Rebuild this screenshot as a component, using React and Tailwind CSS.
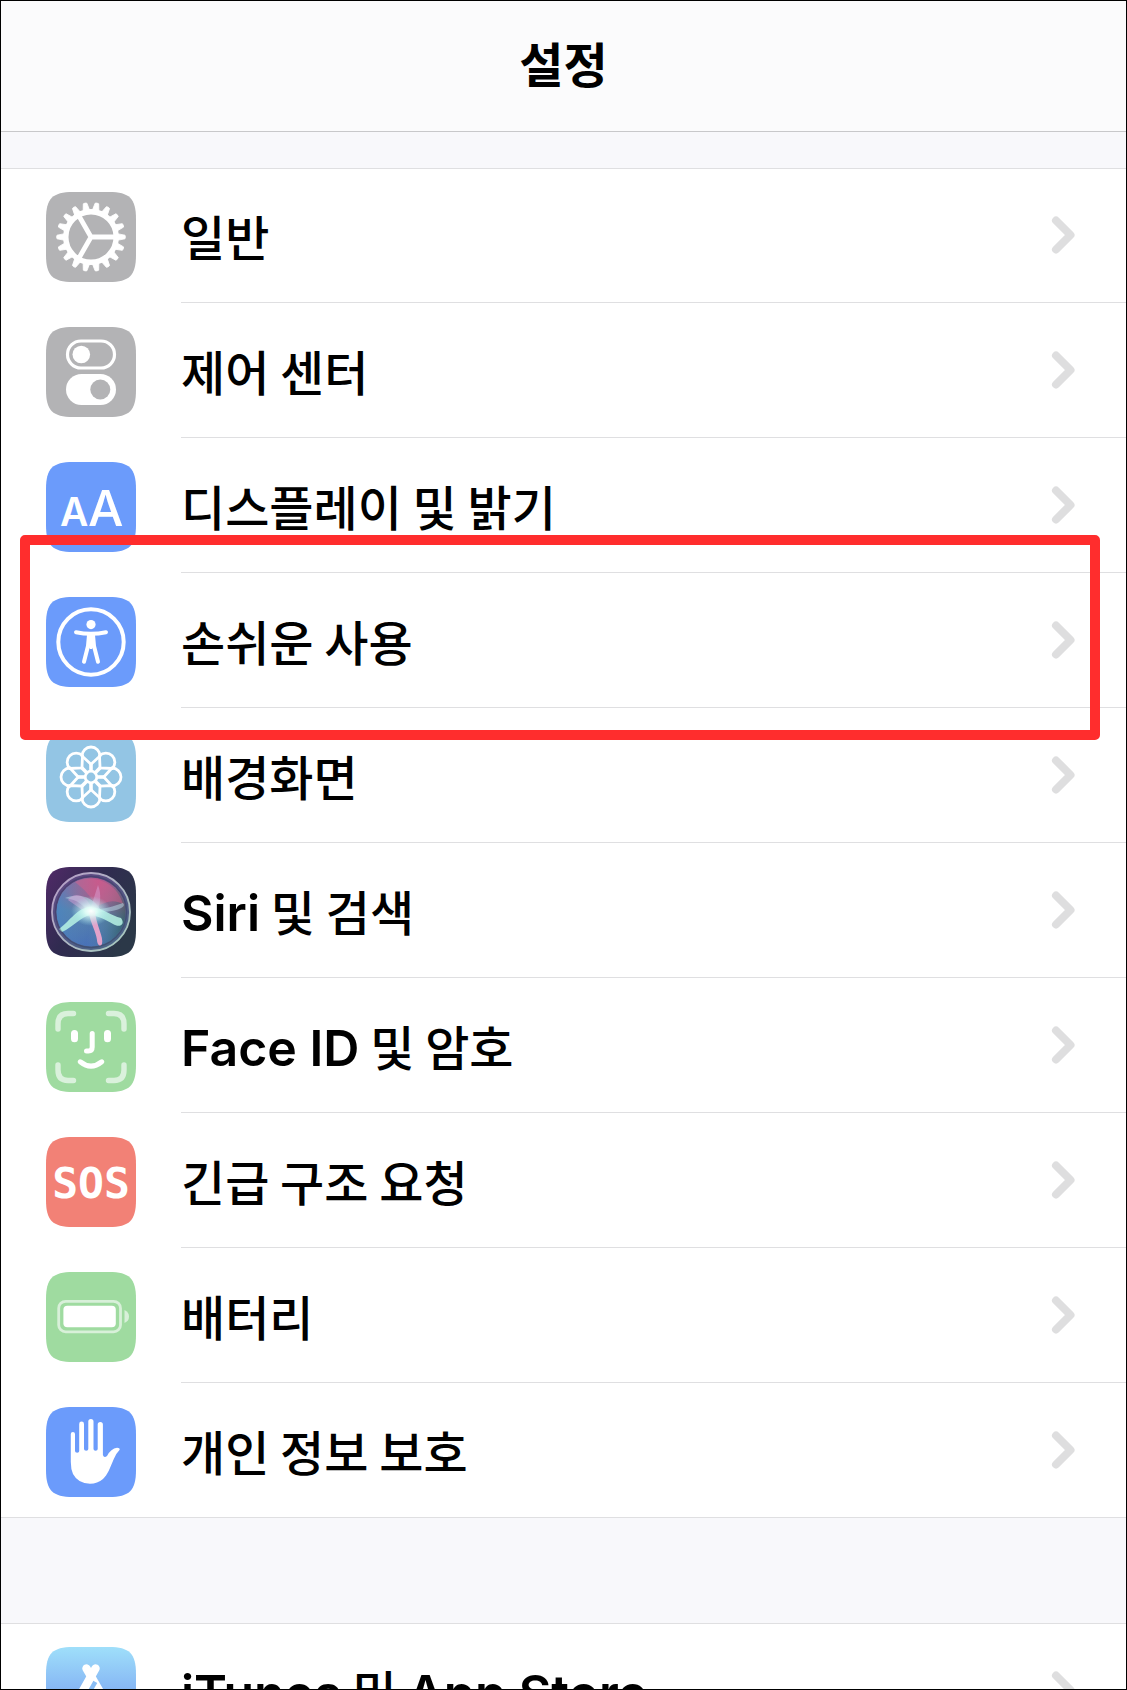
import React from "react";

const TILE = "M27 0H63C83.5 0 90 6.5 90 27V63C90 83.5 83.5 90 63 90H27C6.5 90 0 83.5 0 63V27C0 6.5 6.5 0 27 0Z";
const GEAR_TEETH = Array.from({ length: 18 }, (_, i) => i * 20);
const PETALS = Array.from({ length: 8 }, (_, i) => i * 45);

function Tile({ fill, children }) {
  return (
    <svg viewBox="0 0 90 90" className="mt-6 w-[90px] h-[90px] shrink-0" aria-hidden="true">
      <path d={TILE} fill={fill} />
      {children}
    </svg>
  );
}

function GearIcon() {
  return (
    <Tile fill="#b3b3b5">
      <g transform="translate(45 45)" fill="#fff">
        {GEAR_TEETH.map((deg) => (
          <path key={deg} d="M25 -3.6L34 -1.8Q34.8 0 34 1.8L25 3.6Z" transform={`rotate(${deg})`} stroke="#fff" strokeWidth="0.8" />
        ))}
        <circle r="25.2" fill="none" stroke="#fff" strokeWidth="5.4" />
        <path d="M0 0H24M0 0L-12 -21M0 0L-12 21" stroke="#fff" strokeWidth="4.8" />
      </g>
    </Tile>
  );
}

function ControlIcon() {
  return (
    <Tile fill="#b3b3b5">
      <rect x="21.5" y="14" width="47" height="27" rx="13.5" fill="none" stroke="#fff" strokeWidth="3.2" />
      <circle cx="35.3" cy="27.5" r="8.8" fill="#fff" />
      <rect x="20" y="47" width="50" height="31" rx="15.5" fill="#fff" />
      <circle cx="54.3" cy="62.5" r="10" fill="#b3b3b5" />
    </Tile>
  );
}

function DisplayIcon() {
  return (
    <Tile fill="#6b9bfb">
      <text x="14" y="63.5" fontSize="39" className="font-['Inter',sans-serif] font-semibold" fill="#fff">A</text>
      <text x="42" y="63.5" fontSize="50" className="font-['Inter',sans-serif] font-medium" fill="#fff">A</text>
    </Tile>
  );
}

function AccessibilityIcon() {
  return (
    <Tile fill="#6b9bfb">
      <circle cx="45" cy="45" r="32.7" fill="none" stroke="#fff" strokeWidth="4" />
      <circle cx="45" cy="27.6" r="4.6" fill="#fff" />
      <path
        d="M30 35.2Q45 38.3 60 35.2M43 38L42 49L38 64.8M47 38L48 49L52 64.8"
        fill="none"
        stroke="#fff"
        strokeWidth="4"
        strokeLinecap="round"
        strokeLinejoin="round"
      />
      <path d="M41 36H49V47L46 52H44L41 47Z" fill="#fff" />
    </Tile>
  );
}

function FlowerIcon() {
  return (
    <Tile fill="#93c5e4">
      <g transform="translate(45 45)" fill="none" stroke="#fff" strokeWidth="2.8">
        {PETALS.map((deg) => (
          <g key={deg} transform={`rotate(${deg})`}>
            <path d="M0 -12.8L-9 -21A9 9 0 0 1 9 -21Z" />
            <path d="M0 -5V-13" strokeWidth="3.6" />
          </g>
        ))}
        <circle r="5.8" />
      </g>
    </Tile>
  );
}

function SiriIcon() {
  return (
    <Tile fill="url(#siriBg)">
      <defs>
        <linearGradient id="siriBg" x1="0" y1="0" x2="1" y2="0.6">
          <stop offset="0" stopColor="#512a68" />
          <stop offset="0.5" stopColor="#302b50" />
          <stop offset="1" stopColor="#2b3848" />
        </linearGradient>
        <linearGradient id="siriBand" x1="0.2" y1="0" x2="0.8" y2="1">
          <stop offset="0" stopColor="#5e4480" />
          <stop offset="1" stopColor="#4a6888" />
        </linearGradient>
        <linearGradient id="siriOrb" x1="0.6" y1="0" x2="0.35" y2="1">
          <stop offset="0" stopColor="#b8558c" />
          <stop offset="0.3" stopColor="#a0608f" />
          <stop offset="0.55" stopColor="#5580ac" />
          <stop offset="1" stopColor="#4770b8" />
        </linearGradient>
        <linearGradient id="siriShade" x1="0" y1="0.5" x2="1" y2="0.7">
          <stop offset="0" stopColor="#4a86c4" stopOpacity="0.7" />
          <stop offset="0.5" stopColor="#6090b0" stopOpacity="0" />
          <stop offset="1" stopColor="#24524e" stopOpacity="0.7" />
        </linearGradient>
        <radialGradient id="siriGlow">
          <stop offset="0" stopColor="#fff" />
          <stop offset="0.3" stopColor="#e4fff9" stopOpacity="0.85" />
          <stop offset="1" stopColor="#a0e8f0" stopOpacity="0" />
        </radialGradient>
        <linearGradient id="siriRing" x1="0" y1="0" x2="1" y2="1">
          <stop offset="0" stopColor="#b79cc8" />
          <stop offset="1" stopColor="#a5cdbd" />
        </linearGradient>
      </defs>
      <circle cx="45" cy="45" r="39.5" fill="url(#siriBand)" />
      <circle cx="45" cy="45" r="34.5" fill="url(#siriOrb)" />
      <circle cx="45" cy="45" r="34.5" fill="url(#siriShade)" />
      <path d="M29 15C46 7 70 14 77 37C66 31 58 36 50 40C46 30 38 22 29 15Z" fill="#e0608c" opacity="0.45" />
      <path d="M19 31C34 25 48 31 54 42C63 41 70 38 77 36C82 41 66 45 55 45L44 48C38 38 32 33 19 31Z" fill="#bfe0ec" opacity="0.5" />
      <path d="M22 33C28 24 40 28 45 40L52 18C56 28 54 38 51 45L42 47Z" fill="#dca6dc" opacity="0.45" />
      <path d="M13 62C25 53 31 41 44 40C58 41 65 49 75 51C80 58 73 61 67 57C59 52 51 49 45 48C34 50 27 60 16 65Z" fill="#b7f3e4" opacity="0.85" />
      <path d="M43 45L49 44C50 58 58 70 56 77C54 81 51 77 51 73C50 64 44 56 43 45Z" fill="#f3a6cd" opacity="0.9" />
      <ellipse cx="45" cy="44" rx="20" ry="15" fill="url(#siriGlow)" />
      <circle cx="45" cy="45" r="39" fill="none" stroke="url(#siriRing)" strokeWidth="1.8" />
      <circle cx="45" cy="45" r="35.5" fill="none" stroke="#222a4c" strokeWidth="1.4" opacity="0.3" />
    </Tile>
  );
}

function FaceIcon() {
  return (
    <Tile fill="#9fdba0">
      <g fill="none" strokeLinecap="round">
        <path
          d="M12 27V22Q12 11.5 22 11.5H27.5M62.5 11.5H68Q78 11.5 78 22V27M78 63V68Q78 78.5 68 78.5H62.5M27.5 78.5H22Q12 78.5 12 68V63"
          stroke="#daf1dc"
          strokeWidth="5.4"
        />
        <path d="M28.5 31.6V36.8M61.5 31.6V36.8" stroke="#fff" strokeWidth="7" />
        <path d="M46.2 31.5V45Q46.2 49 42.5 49H40.5" stroke="#fff" strokeWidth="5" />
        <path d="M34.2 59.8Q45 68.5 55.8 59.8" stroke="#fff" strokeWidth="5" />
      </g>
    </Tile>
  );
}

function SosIcon() {
  return (
    <Tile fill="#f28176">
      <text x="45" y="61" textAnchor="middle" fontSize="43" className="font-['DejaVu_Sans_Mono',monospace] font-bold" fill="#fff">SOS</text>
    </Tile>
  );
}

function BatteryIcon() {
  return (
    <Tile fill="#9fdba0">
      <rect x="12.7" y="29.3" width="61.8" height="30.6" rx="7" fill="none" stroke="#d8f0d9" strokeWidth="2.8" />
      <rect x="17.4" y="33.8" width="52.4" height="21.4" rx="4" fill="#fff" />
      <path d="M78.5 38Q83 40 83 44.5Q83 49 78.5 51Z" fill="#d8f0d9" />
    </Tile>
  );
}

function HandIcon() {
  return (
    <Tile fill="#6b9bfb">
      <path
        d="M24.8 27A2.1 2.1 0 0 1 29 27V44Q29 45.7 31.2 45.7Q33.2 45.7 33.2 44V17A2.4 2.4 0 0 1 38 17V42Q38 43.8 40.2 43.8Q42.3 43.8 42.3 42V14.6A2.6 2.6 0 0 1 47.5 14.6V42Q47.5 43.8 49.6 43.8Q51.7 43.8 51.7 42V17.5A2.6 2.6 0 0 1 56.9 17.5V48Q58 51.5 61 49Q65 41.5 71 40.8Q74.5 41 73.5 43Q70 46.5 67.8 52C64 61 61.5 68 57 72Q51.5 76.7 44 76.7Q32 76.5 27 67Q24.8 62 24.8 55Z"
        fill="#fff"
      />
    </Tile>
  );
}

function AppStoreIcon() {
  return (
    <Tile fill="url(#storeBg)">
      <defs>
        <linearGradient id="storeBg" x1="0" y1="0" x2="0" y2="1">
          <stop offset="0" stopColor="#9fdffa" />
          <stop offset="0.5" stopColor="#85b4f4" />
          <stop offset="1" stopColor="#6c8df0" />
        </linearGradient>
      </defs>
      <g fill="none" strokeLinecap="round">
        <path d="M40.5 21.5L66 66" stroke="#fff" strokeWidth="8.4" />
        <path d="M46 33L28 65" stroke="#89bdf5" strokeWidth="12" strokeLinecap="butt" />
        <path d="M49.5 21.5L25 65" stroke="#fff" strokeWidth="8.4" />
        <path d="M20 56H70" stroke="#fff" strokeWidth="8" />
      </g>
    </Tile>
  );
}

function Latin({ children }) {
  return <span className="font-['Inter',sans-serif] text-[50px] leading-none font-semibold">{children}</span>;
}

const settings = [
  { id: "general", label: "일반", icon: <GearIcon /> },
  { id: "control", label: "제어 센터", icon: <ControlIcon /> },
  { id: "display", label: "디스플레이 및 밝기", icon: <DisplayIcon /> },
  { id: "accessibility", label: "손쉬운 사용", icon: <AccessibilityIcon />, highlighted: true },
  { id: "wallpaper", label: "배경화면", icon: <FlowerIcon /> },
  { id: "siri", label: <><Latin>Siri</Latin> 및 검색</>, icon: <SiriIcon /> },
  { id: "faceid", label: <><Latin>Face ID</Latin> 및 암호</>, icon: <FaceIcon /> },
  { id: "sos", label: "긴급 구조 요청", icon: <SosIcon /> },
  { id: "battery", label: "배터리", icon: <BatteryIcon /> },
  { id: "privacy", label: "개인 정보 보호", icon: <HandIcon /> },
];

const storeSettings = [
  { id: "store", label: <><Latin>iTunes</Latin> 및 <Latin>App Store</Latin></>, icon: <AppStoreIcon /> },
];

function SettingsRow({ item, last }) {
  return (
    <li className={`relative ${last ? "border-b border-[#dfdfe1]" : ""}`}>
      <a href={`#${item.id}`} className="flex items-start gap-[45px] pl-[45px]">
        {item.icon}
        <span
          className={`flex flex-1 items-center justify-between pr-[51px] ${
            last ? "h-[134px]" : "h-[135px] border-b border-[#dfdfe1]"
          }`}
        >
          <span className="font-['Noto_Sans_CJK_KR',sans-serif] text-[48px] leading-[72px] font-medium whitespace-nowrap">
            {item.label}
          </span>
          <svg viewBox="0 0 24 40" className="w-6 h-10 shrink-0" aria-hidden="true">
            <path d="M5 5.5L19.5 20L5 34.5" fill="none" stroke="#dededf" strokeWidth="8" strokeLinecap="round" strokeLinejoin="round" />
          </svg>
        </span>
      </a>
      {item.highlighted && (
        <div className="pointer-events-none absolute z-10 -top-[38px] -bottom-[32px] left-[19px] right-[26px] rounded-[5px] border-[10px] border-[#ff2d2d]" />
      )}
    </li>
  );
}

function SettingsGroup({ items }) {
  return (
    <ul className="-mt-px">
      {items.map((item, i) => (
        <SettingsRow key={item.id} item={item} last={i === items.length - 1} />
      ))}
    </ul>
  );
}

function App() {
  return (
    <div className="h-screen overflow-hidden border border-black bg-white text-black font-['Inter','Noto_Sans_CJK_KR',sans-serif]">
      <header className="flex h-[131px] items-center justify-center border-b border-[#c8c8ca] bg-[#fbfbfc]">
        <h1 className="text-[48px] leading-[72px] font-bold">설정</h1>
      </header>
      <main>
        <div className="h-[37px] border-b border-[#dfdfe1] bg-[#f8f8fb]" />
        <SettingsGroup items={settings} />
        <div className="h-[106px] border-b border-[#dfdfe1] bg-[#f8f8fb]" />
        <SettingsGroup items={storeSettings} />
      </main>
    </div>
  );
}

export default App;
